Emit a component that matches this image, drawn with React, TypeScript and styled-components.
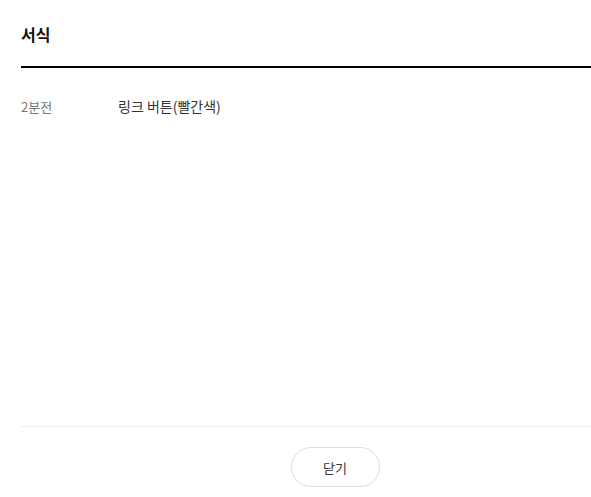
import React from 'react';
import styled, { createGlobalStyle } from 'styled-components';

const GlobalStyle = createGlobalStyle`
  html, body {
    margin: 0;
    padding: 0;
    background: #fff;
    overflow: hidden;
  }
  body {
    font-family: "Noto Sans CJK KR", "Liberation Sans", sans-serif;
  }
`;

const Layer = styled.div`
  display: flex;
  flex-direction: column;
  height: 100vh;
  margin-left: 21px;
  box-sizing: border-box;
`;

const Header = styled.div`
  padding: 22px 0 20px;
  border-bottom: 2px solid #000;
`;

const Title = styled.h2`
  margin: 0;
  font-size: 16px;
  line-height: 24px;
  font-weight: 700;
  color: #111;
`;

const Body = styled.div`
  flex: 1;
  padding-top: 27px;
`;

const Row = styled.div`
  display: flex;
  align-items: baseline;
  line-height: 22px;
`;

const Time = styled.span`
  width: 97px;
  font-size: 13px;
  color: #777;
`;

const Desc = styled.span`
  font-size: 14px;
  color: #333;
`;

const Footer = styled.div`
  display: flex;
  justify-content: center;
  border-top: 1px solid #eee;
  padding: 20px 0 10px 58px;
`;

const CloseButton = styled.button`
  width: 89px;
  height: 40px;
  border: 1px solid #ddd;
  border-radius: 20px;
  background: #fff;
  font-family: inherit;
  font-size: 13px;
  color: #333;
  cursor: pointer;
`;

export default function App() {
  return (
    <>
      <GlobalStyle />
      <Layer>
        <Header>
          <Title>서식</Title>
        </Header>
        <Body>
          <Row>
            <Time>2분전</Time>
            <Desc>링크 버튼(빨간색)</Desc>
          </Row>
        </Body>
        <Footer>
          <CloseButton>닫기</CloseButton>
        </Footer>
      </Layer>
    </>
  );
}
